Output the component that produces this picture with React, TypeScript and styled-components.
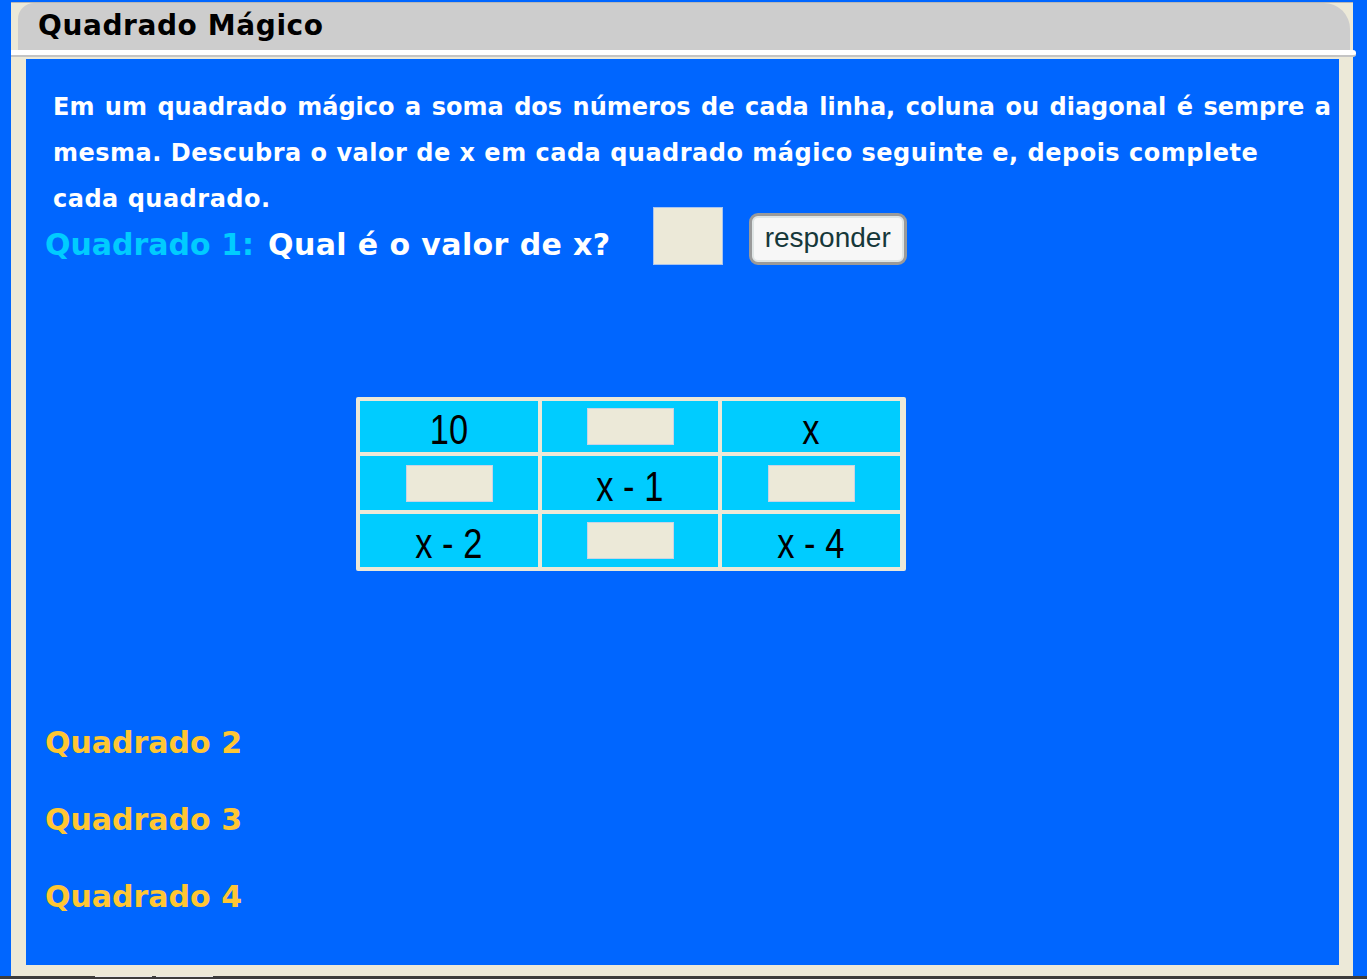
import React from "react";
import styled, { createGlobalStyle } from "styled-components";

const Global = createGlobalStyle`
  html, body { margin: 0; padding: 0; background: #0066ff; }
  body { width: 1367px; height: 979px; overflow: hidden; }
`;

const comic = `"Comic Sans MS", "DejaVu Sans", sans-serif`;

const Page = styled.div`
  width: 1367px;
  height: 979px;
  background: #0066ff;
  display: flex;
  flex-direction: column;
  padding-top: 2px;
  box-sizing: border-box;
`;

const Frame = styled.div`
  margin-left: 11px;
  width: 1342px;
  height: 974px;
  background: #ece9d8;
  border-top: 1px solid #b8b8b8;
  display: flex;
  flex-direction: column;
  box-sizing: border-box;
`;

const Header = styled.div`
  margin-left: 7px;
  margin-right: 3px;
  height: 47px;
  background: #cdcdcd;
  border-radius: 16px 26px 0 0;
  display: flex;
  align-items: center;
  padding-left: 20px;
  padding-bottom: 2px;
  box-sizing: border-box;
`;

const Title = styled.h1`
  margin: 0;
  font-family: ${comic};
  font-weight: bold;
  font-size: 28px;
  color: #000;
  letter-spacing: 0.6px;
`;

const Rule = styled.div`
  height: 5px;
  width: 1345px;
  background: #ffffff;
  border-radius: 0 3px 3px 0;
  border-bottom: 2px solid #c4c4c4;
`;

const Panel = styled.div`
  margin: 2px 14px 0 15px;
  height: 906px;
  background: #0066ff;
  display: flex;
  flex-direction: column;
  padding: 25px 8px 0 19px;
  box-sizing: border-box;
`;

const Intro = styled.div`
  padding-left: 8px;
  font-family: ${comic};
  font-weight: bold;
  font-size: 24px;
  letter-spacing: 0.5px;
  line-height: 46px;
  color: #ffffff;
`;

const JustLine = styled.div`
  text-align: justify;
  text-align-last: justify;
  letter-spacing: 0;
`;

const PlainLine = styled.div`
  text-align: left;
`;

const QuestionRow = styled.div`
  margin-top: -15px;
  height: 58px;
  display: flex;
  align-items: center;
`;

const Label = styled.span<{ $color: string }>`
  font-family: ${comic};
  font-weight: bold;
  font-size: 30px;
  color: ${(p) => p.$color};
  white-space: pre;
  padding-top: 17px;
`;

const Question = styled.span`
  font-family: ${comic};
  font-weight: bold;
  font-size: 30px;
  letter-spacing: 0.4px;
  color: #ffffff;
  margin-left: 14px;
  padding-top: 17px;
`;

const AnswerBox = styled.input`
  width: 70px;
  height: 58px;
  box-sizing: border-box;
  margin-left: 42px;
  background: #ece9d8;
  border: 1px solid #a9c4ee;
  outline: none;
`;

const Button = styled.button`
  margin-left: 26px;
  height: 52px;
  width: 158px;
  margin-top: 6px;
  box-sizing: border-box;
  border: 3px solid #9a9a9a;
  border-radius: 9px;
  background: #f7f7f7;
  box-shadow: inset 0 0 0 2px #dfe5e5;
  font-family: "Liberation Sans", Arial, sans-serif;
  font-size: 28px;
  color: #16383a;
  padding: 0 0 3px;
`;

const TableWrap = styled.div`
  margin-top: 132px;
  margin-left: 311px;
  align-self: flex-start;
`;

const Grid = styled.div`
  width: 550px;
  display: grid;
  grid-template-columns: 178px 176px 178px;
  grid-template-rows: 51px 54px 53px;
  gap: 4px;
  padding: 4px;
  box-sizing: border-box;
  background: #ece9d8;
  border-radius: 2px;
`;

const Cell = styled.div`
  background: #00ccff;
  display: flex;
  align-items: center;
  justify-content: center;
  font-family: "Liberation Sans", Arial, sans-serif;
  font-size: 43px;
  color: #000;
`;

const CellText = styled.span`
  display: inline-block;
  transform: scaleX(0.8);
  line-height: 1;
  padding-top: 6px;
  white-space: pre;
`;

const CellInput = styled.input`
  width: 87px;
  height: 37px;
  box-sizing: border-box;
  background: #ece9d8;
  border: 1px solid #c7d4e6;
  outline: none;
`;

const Sections = styled.div`
  margin-top: 149px;
  display: flex;
  flex-direction: column;
  gap: 32px;
`;

const Section = styled.div`
  font-family: ${comic};
  font-weight: bold;
  font-size: 30px;
  line-height: 45px;
  color: #ffc633;
`;

const Bottom = styled.div`
  margin-top: auto;
  height: 10px;
`;

const Baseline = styled.div`
  height: 3px;
  background: #3c3c3c;
  display: flex;
  gap: 4px;
  padding-left: 95px;
`;

const Tab = styled.div`
  width: 57px;
  height: 1px;
  background: #e8e8e8;
`;

type C = { t?: string };
const cells: C[] = [
  { t: "10" }, {}, { t: "x" },
  {}, { t: "x - 1" }, {},
  { t: "x - 2" }, {}, { t: "x - 4" },
];

export default function App() {
  return (
    <>
      <Global />
      <Page>
        <Frame>
          <Header>
            <Title>Quadrado Mágico</Title>
          </Header>
          <Rule />
          <Panel>
            <Intro>
              <JustLine>
                Em um quadrado mágico a soma dos números de cada linha, coluna ou diagonal é sempre a
              </JustLine>
              <PlainLine>
                mesma. Descubra o valor de x em cada quadrado mágico seguinte e, depois complete
              </PlainLine>
              <PlainLine>cada quadrado.</PlainLine>
            </Intro>
            <QuestionRow>
              <Label $color="#00ccff">Quadrado 1:</Label>
              <Question>Qual é o valor de x?</Question>
              <AnswerBox type="text" />
              <Button type="button">responder</Button>
            </QuestionRow>
            <TableWrap>
              <Grid>
                {cells.map((c, i) => (
                  <Cell key={i}>
                    {c.t ? <CellText>{c.t}</CellText> : <CellInput type="text" />}
                  </Cell>
                ))}
              </Grid>
            </TableWrap>
            <Sections>
              <Section>Quadrado 2</Section>
              <Section>Quadrado 3</Section>
              <Section>Quadrado 4</Section>
            </Sections>
          </Panel>
          <Bottom />
        </Frame>
        <Baseline>
          <Tab />
          <Tab />
        </Baseline>
      </Page>
    </>
  );
}
